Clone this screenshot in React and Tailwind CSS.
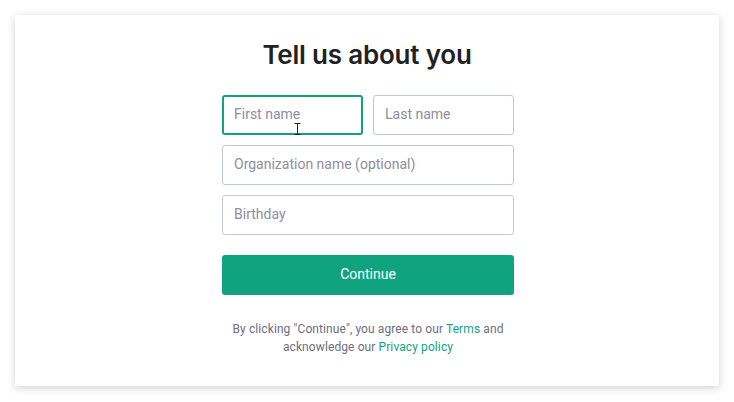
export default function App() {
  return (
    <div className="w-[734px] h-[402px] bg-white pt-[15px] px-[15px]" style={{ fontFamily: "Roboto, 'Noto Sans', sans-serif" }}>
      <div className="w-[704px] h-[371px] bg-white shadow-[0_2px_8px_rgba(0,0,0,0.18)] flex flex-col items-center pt-[24px]">
        <h1 className="text-[26px] leading-[32px] font-semibold text-[#202123] tracking-[-0.2px]" style={{ fontFamily: "Inter, sans-serif" }}>Tell us about you</h1>
        <div className="w-[292px] mt-[24px] ml-[2px] flex flex-col gap-[10px]">
          <div className="flex gap-[10px]">
            <div className="relative flex-1 h-[40px] border-2 border-[#10a37f] rounded-[3px] flex items-center px-[10px] pb-[2px] text-[14px] text-[#8e8ea0]">
              First name
              <svg className="absolute left-[70px] top-[26px]" width="7" height="12" viewBox="0 0 7 12">
                <path d="M0.5 0.5h6M3.5 0.5v11M0.5 11.5h6" stroke="#222" strokeWidth="1" fill="none" />
              </svg>
            </div>
            <div className="flex-1 h-[40px] border border-[#c2c8d0] rounded-[3px] flex items-center px-[11px] pb-[2px] text-[14px] text-[#8e8ea0]">Last name</div>
          </div>
          <div className="h-[40px] border border-[#c2c8d0] rounded-[3px] flex items-center px-[11px] pb-[2px] text-[14px] text-[#8e8ea0]">Organization name (optional)</div>
          <div className="h-[40px] border border-[#c2c8d0] rounded-[3px] flex items-center px-[11px] pb-[2px] text-[14px] text-[#8e8ea0]">Birthday</div>
          <button className="mt-[10px] h-[40px] bg-[#10a37f] rounded-[3px] text-white text-[14px] pb-[1px]">Continue</button>
          <p className="mt-[15px] text-center text-[12px] leading-[18px] text-[#6e6e80] tracking-[0.1px]">
            By clicking "Continue", you agree to our <span className="text-[#10a37f]">Terms</span> and
            <br />
            acknowledge our <span className="text-[#10a37f]">Privacy policy</span>
          </p>
        </div>
      </div>
    </div>
  );
}
